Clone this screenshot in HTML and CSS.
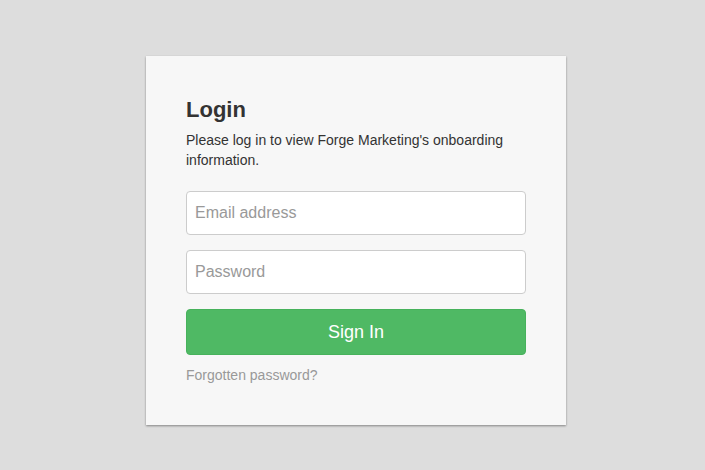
FILE: index.html
```html
<!DOCTYPE html>
<html>
<head>
<meta charset="utf-8">
<link rel="stylesheet" href="styles.css">
</head>
<body>
<div class="page">
  <div class="card">
    <h1 class="title">Login</h1>
    <p class="intro">Please log in to view Forge Marketing's onboarding information.</p>
    <form class="form">
      <input class="field" type="email" placeholder="Email address">
      <input class="field" type="password" placeholder="Password">
      <button class="btn" type="button">Sign In</button>
    </form>
    <a class="forgot" href="#">Forgotten password?</a>
  </div>
</div>
</body>
</html>
```
FILE: styles.css
```css
html, body {
  margin: 0;
  padding: 0;
  background: #dddddd;
  font-family: "Liberation Sans", Arial, Helvetica, sans-serif;
}
.page {
  box-sizing: border-box;
  min-height: 470px;
  display: flex;
  justify-content: center;
  align-items: flex-start;
  padding-top: 56px;
  padding-left: 7px;
  padding-bottom: 20px;
}
.card {
  width: 340px;
  height: 289px;
  padding: 40px 40px 40px 40px;
  background: #f7f7f7;
  box-shadow: 0 1px 2px rgba(0,0,0,0.4);
}
.title {
  margin: 0;
  font-size: 22px;
  line-height: 28px;
  font-weight: bold;
  color: #333;
}
.intro {
  margin: 6px 0 0 0;
  font-size: 14px;
  line-height: 20px;
  color: #333;
}
.form {
  display: flex;
  flex-direction: column;
  gap: 15px;
  margin-top: 21px;
}
.field {
  box-sizing: border-box;
  width: 340px;
  height: 44px;
  padding: 0 8px;
  border: 1px solid #cccccc;
  border-radius: 4px;
  background: #fff;
  font-family: inherit;
  font-size: 16px;
  color: #333;
  outline: none;
}
.field::placeholder {
  color: #999;
}
.btn {
  box-sizing: border-box;
  width: 340px;
  height: 46px;
  border: 1px solid #47b25c;
  border-radius: 4px;
  background: #4fb964;
  color: #fff;
  font-family: inherit;
  font-size: 18px;
}
.forgot {
  display: block;
  margin-top: 11px;
  font-size: 14px;
  line-height: 18px;
  color: #999;
  text-decoration: none;
}
```
